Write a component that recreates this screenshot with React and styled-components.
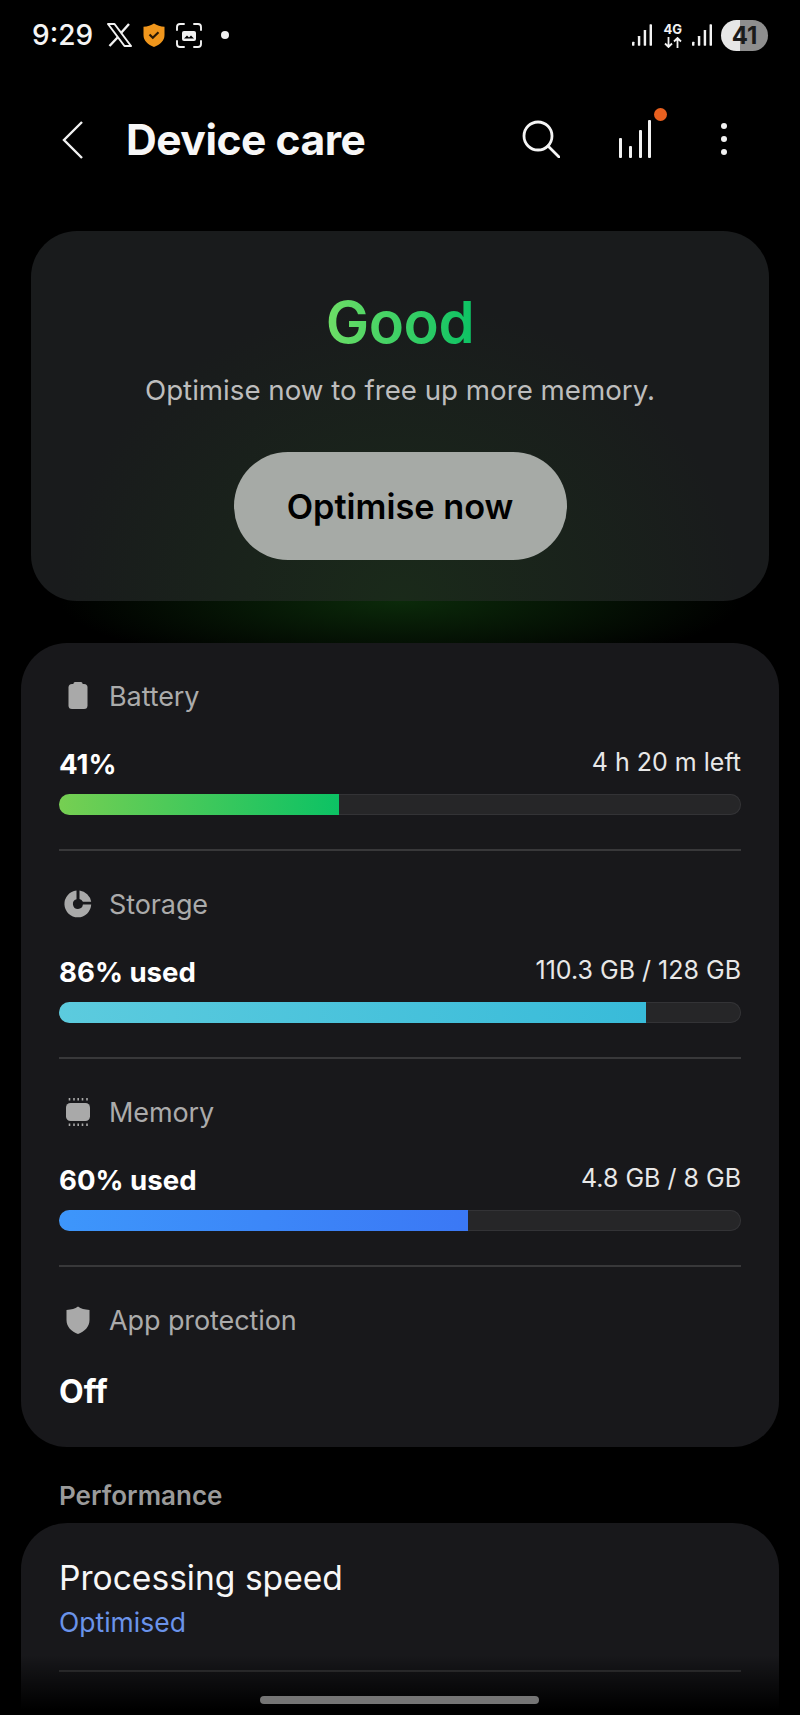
import React from "react";
import styled, { createGlobalStyle } from "styled-components";

const GlobalStyle = createGlobalStyle`
  html, body {
    margin: 0;
    padding: 0;
    background: #000;
  }
  body {
    font-family: Inter, "Noto Sans", sans-serif;
    color: #fff;
  }
`;

const sections = [
  {
    name: "Battery",
    icon: "battery",
    value: "41%",
    detail: "4 h 20 m left",
    percent: 41,
    from: "#76cf52",
    to: "#0cc264",
  },
  {
    name: "Storage",
    icon: "storage",
    value: "86% used",
    detail: "110.3 GB / 128 GB",
    percent: 86,
    from: "#5ccbde",
    to: "#38bbd9",
  },
  {
    name: "Memory",
    icon: "memory",
    value: "60% used",
    detail: "4.8 GB / 8 GB",
    percent: 60,
    from: "#3d96fb",
    to: "#3b78f5",
  },
];

function SectionIcon({ name }) {
  if (name === "battery") {
    return (
      <svg width="30" height="30" viewBox="0 0 30 30" fill="#a9a9a9">
        <rect x="10.5" y="1" width="9" height="4" rx="1.5" />
        <rect x="5.5" y="3" width="19" height="25" rx="3.5" />
      </svg>
    );
  }
  if (name === "storage") {
    return (
      <svg width="30" height="30" viewBox="0 0 30 30" fill="#a9a9a9">
        <path d="M13.5 1.6V10.2A5 5 0 1 0 19.9 15.6H28.2A13.4 13.4 0 1 1 13.5 1.6Z" />
        <path d="M16.5 1.6A13.4 13.4 0 0 1 28.2 12.8H19.9A5 5 0 0 0 16.5 10Z" />
      </svg>
    );
  }
  if (name === "memory") {
    return (
      <svg width="30" height="30" viewBox="0 0 30 30" fill="#a9a9a9">
        <rect x="3" y="6" width="24" height="18" rx="4.5" />
        <path
          d="M6.5 1v2.500M11 1v2.500M15.2 1v2.500M19.5 1v2.500M24 1v2.500M6.5 26.500v2.500M11 26.500v2.500M15.200 26.500v2.500M19.500 26.500v2.500M24 26.500v2.500"
          stroke="#a9a9a9"
          strokeWidth="1.600"
        />
      </svg>
    );
  }
  return (
    <svg width="30" height="30" viewBox="0 0 30 30" fill="#a9a9a9">
      <path d="M15 1.500C18 3.600 21.500 4.700 26.500 5V15C26.500 22 21.500 26.500 15 29C8.500 26.500 3.500 22 3.500 15V5C8.500 4.700 12 3.600 15 1.500Z" />
    </svg>
  );
}

function Signal() {
  return (
    <svg width="20" height="22" viewBox="0 0 20.500 22" fill="#f2f2f2">
      <rect x="0" y="18" width="2.500" height="4" rx="0.500" />
      <rect x="6" y="12" width="2.500" height="10" rx="0.500" />
      <rect x="12" y="6" width="2.500" height="16" rx="0.500" />
      <rect x="18" y="0" width="2.500" height="22" rx="0.500" />
    </svg>
  );
}

function App() {
  return (
    <Screen>
      <GlobalStyle />
      <StatusBar>
        <StatusLeft>
          <Time>9:29</Time>
          <svg width="25" height="24" viewBox="0 0 25 24">
            <path
              d="M1 1H7.500L24 23H17.500Z"
              fill="none"
              stroke="#f2f2f2"
              strokeWidth="2"
              strokeLinejoin="round"
            />
            <path d="M22 1L14 10M11 14L2.500 23" stroke="#f2f2f2" strokeWidth="2.400" />
          </svg>
          <svg width="22" height="24" viewBox="0 0 22 24">
            <path
              d="M11 0.500C14 2.500 17.500 3.500 21.500 3.800V12C21.500 18 17 21.500 11 24C5 21.500 0.500 18 0.500 12V3.800C4.500 3.500 8 2.500 11 0.500Z"
              fill="#f0961c"
            />
            <path
              d="M6.500 11.500L9.800 14.800L15.500 9.300"
              fill="none"
              stroke="#2b1a05"
              strokeWidth="2.200"
            />
          </svg>
          <svg width="26" height="25" viewBox="0 0 26 25" fill="none">
            <path
              d="M1 7V4Q1 1 4 1H8M18 1H22Q25 1 25 4V7M25 18V21Q25 24 22 24H18M8 24H4Q1 24 1 21V18"
              stroke="#f2f2f2"
              strokeWidth="1.900"
              strokeLinecap="round"
            />
            <rect x="6" y="8" width="14" height="10" rx="2" fill="#f2f2f2" />
            <path d="M8 15.500L11 12.500L13 14.500L15 12.500L18 15.500Z" fill="#000" />
          </svg>
          <StatusDot />
        </StatusLeft>
        <StatusRight>
          <Signal />
          <NetworkType>
            <span>4G</span>
            <svg width="18" height="11" viewBox="0 0 18 11" fill="none" stroke="#f2f2f2" strokeWidth="1.800">
              <path d="M4.500 0V10M1 6.500L4.500 10L8 6.500M13.500 11V1M10 4.500L13.500 1L17 4.500" />
            </svg>
          </NetworkType>
          <Signal />
          <BatteryPill>41</BatteryPill>
        </StatusRight>
      </StatusBar>

      <Header>
        <HeaderTitle>
          <svg width="22" height="38" viewBox="0 0 22 38" fill="none">
            <path d="M20 1L2 19L20 37" stroke="#f2f2f2" strokeWidth="2.400" />
          </svg>
          <Title>Device care</Title>
        </HeaderTitle>
        <HeaderActions>
          <svg width="38" height="38" viewBox="0 0 38 38" fill="none" stroke="#f5f5f5" strokeWidth="2.800">
            <circle cx="16" cy="16" r="14" />
            <path d="M26 26L37 37" strokeLinecap="round" />
          </svg>
          <ChartButton>
            <svg width="32" height="38" viewBox="0 0 32 38" fill="#f2f2f2">
              <rect x="0" y="18" width="3" height="20" rx="1" />
              <rect x="10" y="26" width="3" height="12" rx="1" />
              <rect x="20" y="10" width="3" height="28" rx="1" />
              <rect x="29" y="0" width="3" height="38" rx="1" />
            </svg>
            <NotifyDot />
          </ChartButton>
          <Kebab>
            <i />
            <i />
            <i />
          </Kebab>
        </HeaderActions>
      </Header>

      <HeroCard>
        <HeroStatus>Good</HeroStatus>
        <HeroText>Optimise now to free up more memory.</HeroText>
        <OptimiseButton>Optimise now</OptimiseButton>
      </HeroCard>
      <Glow />

      <Card>
        {sections.map((s) => (
          <React.Fragment key={s.name}>
            <Section>
              <SectionHead>
                <SectionIcon name={s.icon} />
                <span>{s.name}</span>
              </SectionHead>
              <ValueRow>
                <Value>{s.value}</Value>
                <Detail>{s.detail}</Detail>
              </ValueRow>
              <Track>
                <Fill $from={s.from} $to={s.to} style={{ width: `${s.percent}%` }} />
              </Track>
            </Section>
            <Divider />
          </React.Fragment>
        ))}
        <LastSection>
          <SectionHead>
            <SectionIcon name="shield" />
            <span>App protection</span>
          </SectionHead>
          <ValueRow>
            <OffValue>Off</OffValue>
          </ValueRow>
        </LastSection>
      </Card>

      <GroupLabel>Performance</GroupLabel>
      <PerformanceCard>
        <ItemTitle>Processing speed</ItemTitle>
        <ItemStatus>Optimised</ItemStatus>
        <Divider />
      </PerformanceCard>

      <BottomFade />
      <HomeBar />
    </Screen>
  );
}

export default App;

const Screen = styled.div`
  position: relative;
  width: 800px;
  height: 1715px;
  overflow: hidden;
  background: #000;
`;

const StatusBar = styled.div`
  display: flex;
  justify-content: space-between;
  align-items: center;
  height: 70px;
  padding: 0 32px;
`;

const StatusLeft = styled.div`
  display: flex;
  align-items: center;
  gap: 11px;
`;

const Time = styled.span`
  font-size: 28px;
  font-weight: 500;
  color: #f5f5f5;
  margin-right: 3px;
`;

const StatusDot = styled.span`
  width: 8px;
  height: 8px;
  margin-left: 8px;
  border-radius: 50%;
  background: #f2f2f2;
`;

const StatusRight = styled.div`
  display: flex;
  align-items: center;
  gap: 9px;
`;

const NetworkType = styled.div`
  display: flex;
  flex-direction: column;
  align-items: center;
  gap: 1px;
  margin: 0 1px 0 2px;
  font-size: 13px;
  font-weight: 700;
  line-height: 13px;
  color: #f2f2f2;
`;

const BatteryPill = styled.div`
  width: 47px;
  height: 31px;
  border-radius: 16px;
  background: linear-gradient(90deg, #e6e6e6 40%, #8e8e8e 40%);
  color: #1a1a1a;
  font-size: 24px;
  font-weight: 700;
  line-height: 31px;
  text-align: center;
`;

const Header = styled.header`
  display: flex;
  justify-content: space-between;
  align-items: center;
  height: 140px;
  padding: 0 73px 0 62px;
  margin-bottom: 21px;
`;

const HeaderTitle = styled.div`
  display: flex;
  align-items: center;
  gap: 42px;
`;

const Title = styled.h1`
  margin: 0 0 2px;
  font-size: 42.6px;
  font-weight: 700;
  letter-spacing: -0.5px;
  color: #f7f7f7;
`;

const HeaderActions = styled.div`
  display: flex;
  align-items: center;
  gap: 59px;
  margin-bottom: 2px;
`;

const ChartButton = styled.div`
  position: relative;
  display: flex;
  margin-right: 11px;
`;

const NotifyDot = styled.span`
  position: absolute;
  top: -12px;
  right: -16px;
  width: 13px;
  height: 13px;
  border-radius: 50%;
  background: #e8601f;
`;

const Kebab = styled.div`
  display: flex;
  flex-direction: column;
  gap: 7px;

  i {
    display: block;
    width: 6px;
    height: 6px;
    border-radius: 50%;
    background: #f2f2f2;
  }
`;

const HeroCard = styled.section`
  display: flex;
  flex-direction: column;
  align-items: center;
  box-sizing: border-box;
  width: 738px;
  height: 370px;
  margin-left: 31px;
  padding-top: 62px;
  border-radius: 46px;
  background:
    radial-gradient(ellipse 340px 300px at 50% 100%, #1a2a1a 0%, rgba(27, 42, 26, 0) 100%),
    #191b1c;
`;

const HeroStatus = styled.div`
  font-size: 58px;
  font-weight: 600;
  line-height: 58px;
  letter-spacing: -0.5px;
  background: linear-gradient(90deg, #6ede66, #0cc264);
  -webkit-background-clip: text;
  background-clip: text;
  color: transparent;
`;

const HeroText = styled.p`
  margin: 21px 0 0;
  font-size: 27.7px;
  line-height: 36px;
  color: #bdbdbd;
`;

const OptimiseButton = styled.button`
  width: 333px;
  height: 108px;
  margin-top: 44px;
  border: none;
  border-radius: 54px;
  background: #a6aaa6;
  color: #000;
  font-family: inherit;
  font-size: 34.3px;
  font-weight: 600;
`;

const Glow = styled.div`
  height: 42px;
  background: radial-gradient(ellipse 340px 70px at 50% 0, #0b2a0a 0%, rgba(10, 32, 8, 0) 100%);
`;

const Card = styled.section`
  box-sizing: border-box;
  width: 758px;
  height: 804px;
  margin-left: 21px;
  padding: 0 38px;
  border-radius: 46px;
  background: #18181b;
`;

const Section = styled.div`
  padding: 30px 0 34px;
`;

const LastSection = styled.div`
  padding-top: 30px;
`;

const SectionHead = styled.div`
  display: flex;
  align-items: center;
  gap: 16px;
  height: 46px;
  padding-left: 4px;
  font-size: 27px;
  letter-spacing: -0.1px;
  color: #ababab;
`;

const ValueRow = styled.div`
  display: flex;
  justify-content: space-between;
  align-items: center;
  height: 42px;
  margin: 24px 0 9px;
`;

const Value = styled.span`
  font-size: 27.6px;
  font-weight: 700;
  color: #fff;
`;

const OffValue = styled.span`
  margin-top: 6px;
  font-size: 32px;
  font-weight: 700;
  color: #fff;
`;

const Detail = styled.span`
  margin-bottom: 4px;
  font-size: 25px;
  color: #e8e8e8;
`;

const Track = styled.div`
  height: 21px;
  overflow: hidden;
  border-radius: 11px;
  background: #262628;
  box-shadow: inset 0 0 0 1px #333336;
`;

const Fill = styled.div`
  height: 100%;
  background: linear-gradient(90deg, ${(p) => p.$from}, ${(p) => p.$to});
`;

const Divider = styled.div`
  height: 2px;
  background: #38383a;
`;

const GroupLabel = styled.h2`
  margin: 0;
  height: 76px;
  padding-left: 59px;
  font-size: 26px;
  font-weight: 600;
  line-height: 98px;
  color: #9a9a9a;
`;

const PerformanceCard = styled.section`
  box-sizing: border-box;
  width: 758px;
  height: 240px;
  margin-left: 21px;
  padding: 33px 38px 0;
  border-radius: 46px 46px 0 0;
  background: #18181b;
`;

const ItemTitle = styled.div`
  font-size: 33.6px;
  line-height: 44px;
  color: #f7f7f7;
`;

const ItemStatus = styled.div`
  margin: 2px 0 28px;
  font-size: 26.5px;
  line-height: 40px;
  color: #6a93ea;
`;

const BottomFade = styled.div`
  position: absolute;
  left: 0;
  right: 0;
  bottom: 0;
  height: 60px;
  background: linear-gradient(180deg, rgba(0, 0, 0, 0), #000 90%);
`;

const HomeBar = styled.div`
  position: absolute;
  left: 260px;
  bottom: 11px;
  width: 279px;
  height: 8px;
  border-radius: 4px;
  background: #757575;
`;
